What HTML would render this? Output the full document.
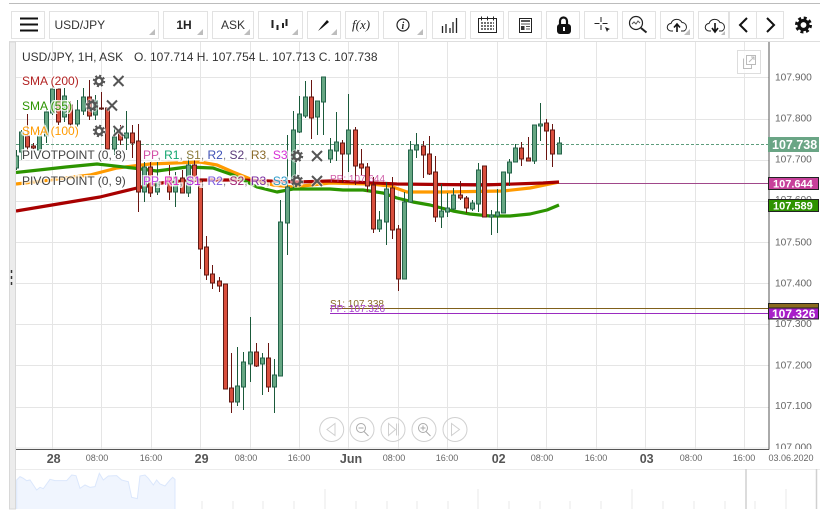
<!DOCTYPE html>
<html><head><meta charset="utf-8"><style>
html,body{margin:0;padding:0;background:#fff;width:834px;height:515px;overflow:hidden}
svg{display:block;font-family:"Liberation Sans",sans-serif}
.b{fill:#fff;stroke:#e2e2e2}
.tri{fill:#bdbdbd}
.ax{font-size:10.2px;fill:#666}
.t{font-size:9px;fill:#666;text-anchor:middle}
.d{font-size:12.5px;font-weight:bold;fill:#555;text-anchor:middle}
.l{font-size:12px;paint-order:stroke;stroke:rgba(255,255,255,.75);stroke-width:3px}
.i{fill:none;stroke:#222}
.z{fill:none;stroke:#d0d0d0}
</style></head><body>
<svg width="834" height="515" viewBox="0 0 834 515" xmlns="http://www.w3.org/2000/svg">
<defs>
<g id="gear"><circle r="7" fill="#fff" fill-opacity=".5"/><circle r="3.4" fill="none" stroke="#555" stroke-width="2.4"/><circle r="5.2" fill="none" stroke="#555" stroke-width="2" stroke-dasharray="2.1 1.98"/></g>
<g id="x"><path d="M-5-5L5 5M5-5L-5 5" stroke="#fff" stroke-opacity=".6" stroke-width="4" fill="none"/><path d="M-5-5L5 5M5-5L-5 5" stroke="#555" stroke-width="2" fill="none"/></g>
<clipPath id="ac"><rect x="770" y="42" width="60" height="407"/></clipPath>
<clipPath id="pc"><rect x="16" y="42" width="753" height="407"/></clipPath>
</defs>
<rect width="834" height="515" fill="#fff"/>
<!-- top lines -->
<path d="M9 3.5H820" stroke="#bcbcbc"/>
<path d="M9 41.5H820" stroke="#dedede"/>
<!-- side strip -->
<rect x="9.5" y="42" width="6" height="467" fill="#ececec" stroke="#d8d8d8"/>
<path d="M11.5 270v3M11.5 276v3M11.5 282v3" stroke="#333" stroke-width="1.5"/>
<!-- grid -->
<path d="M52.5 42V449M101.5 42V449M151.5 42V449M200.5 42V449M250.5 42V449M299.5 42V449M348.5 42V449M398.5 42V449M447.5 42V449M497.5 42V449M546.5 42V449M596.5 42V449M645.5 42V449M695.5 42V449M744.5 42V449M16 77.5H769M16 119.5H769M16 160.5H769M16 201.5H769M16 242.5H769M16 283.5H769M16 324.5H769M16 365.5H769M16 407.5H769M16 448H769" stroke="#e5e5e5" fill="none"/>
<g clip-path="url(#pc)">
<!-- horizontal levels -->
<path d="M16 144.5H769" stroke="#5d9e7d" stroke-dasharray="3 2"/>
<path d="M330 183.5H769" stroke="#a0488a"/>
<path d="M330 308.5H769" stroke="#80601a"/>
<path d="M330 313.5H769" stroke="#9a2cc0"/>
<!-- MAs -->
<polyline fill="none" stroke="#ff9a00" stroke-width="3.2" stroke-linejoin="round" points="16,184 50,180 90,175 117,168 150,164 200,162 217,165 233,172 253,180 273,185 293,187 330,183 370,184 390,186 407,192 443,192 503,191 530,188 559,182"/>
<polyline fill="none" stroke="#a80000" stroke-width="3.2" stroke-linejoin="round" points="16,211 40,207 100,197 137,188 167,182 200,180 240,180 297,182 330,181 397,184 483,185 543,183 559,182"/>
<polyline fill="none" stroke="#2c9400" stroke-width="3.2" stroke-linejoin="round" points="16,172.5 66,167 97,164 133,168 157,171 187,167 213,168 233,175 257,187 277,192 293,189 330,189 343,190 363,190 383,193 397,198 413,202 430,205 453,211 470,214 490,216 510,216 530,214 547,210 559,205"/>
<!-- wicks -->
<path fill="none" stroke="#1a5a3a" d="M16.5 150V170M21.5 130V160M39.5 130V153M46.5 108V143M52.5 85V115M64.5 88V122M77.5 100V127M83.5 88V115M95.5 95V120M114.5 127V155M126.5 111V150M144.5 162V202M157.5 162V195M175.5 172V207M188.5 155V197M237.5 347V406M243.5 352V410M250.5 317V382M262.5 353V395M274.5 359V413M280.5 200V376M287.5 135V255M293.5 111V188M299.5 96V133M305.5 81V118M317.5 101V135M323.5 77V135M330.5 138V163M336.5 112V161M348.5 94V172M379.5 211V232M386.5 182V245M404.5 192V279M410.5 141V202M416.5 133V158M441.5 184V228M447.5 193V217M453.5 188V210M472.5 200V211M478.5 163V212M491.5 210V235M497.5 189V233M509.5 159V186M515.5 144V162M534.5 125V164M540.5 103V141M559.5 137V154"/>
<path fill="none" stroke="#6a1410" d="M27.5 114V152M33.5 143V150M58.5 89V125M70.5 101V128M89.5 80V120M101.5 92V110M120.5 125V145M132.5 125V158M138.5 124V212M150.5 162V197M169.5 165V200M182.5 170V193M194.5 160V185M200.5 180V269M206.5 236V280M212.5 265V289M219.5 277V292M231.5 353V413M256.5 343V367M268.5 343V392M311.5 80V139M342.5 140V183M355.5 127V185M361.5 149V175M367.5 163V192M373.5 177V233M392.5 177V239M398.5 225V291M423.5 141V178M429.5 136V175M435.5 156V222M460.5 181V200M466.5 196V213M521.5 142V166M528.5 137V161M546.5 119V160M552.5 124V167"/>
<!-- bodies -->
<path fill="#66a783" stroke="#24634a" d="M14.5 156h4v12h-4zM19.5 132h4v20h-4zM37.5 136h4v14h-4zM44.5 112h4v24h-4zM50.5 89h4v24h-4zM62.5 96h4v21h-4zM75.5 110h4v14h-4zM81.5 97h4v14h-4zM93.5 101h4v14h-4zM112.5 137h4v12h-4zM124.5 133h4v5h-4zM142.5 167h4v25h-4zM155.5 182h4v10h-4zM173.5 177h4v15h-4zM186.5 165h4v28h-4zM235.5 386h4v16h-4zM241.5 362h4v25h-4zM248.5 352h4v12h-4zM260.5 358h4v6h-4zM272.5 375h4v12h-4zM278.5 222h4v154h-4zM285.5 187h4v36h-4zM291.5 130h4v48h-4zM297.5 114h4v18h-4zM303.5 97h4v19h-4zM315.5 101h4v16h-4zM321.5 77h4v25h-4zM328.5 150h4v9h-4zM334.5 142h4v9h-4zM346.5 130h4v24h-4zM377.5 220h4v9h-4zM384.5 189h4v33h-4zM402.5 202h4v77h-4zM408.5 150h4v52h-4zM414.5 145h4v5h-4zM439.5 211h4v6h-4zM445.5 208h4v4h-4zM451.5 195h4v14h-4zM470.5 203h4v6h-4zM476.5 170h4v34h-4zM489.5 215h4v2h-4zM495.5 212h4v4h-4zM501.5 172h4v41h-4zM507.5 162h4v11h-4zM513.5 148h4v14h-4zM532.5 125h4v36h-4zM538.5 124h4v2h-4zM557.5 143h4v11h-4z"/>
<path fill="#d94f3d" stroke="#5e1a14" d="M25.5 136h4v11h-4zM31.5 146h4v2h-4zM56.5 89h4v33h-4zM68.5 105h4v19h-4zM87.5 97h4v19h-4zM99.5 108h4v1h-4zM105.5 108h4v41h-4zM118.5 133h4v7h-4zM130.5 133h4v10h-4zM136.5 141h4v51h-4zM148.5 167h4v26h-4zM167.5 177h4v15h-4zM180.5 178h4v15h-4zM192.5 165h4v15h-4zM198.5 180h4v69h-4zM204.5 247h4v28h-4zM210.5 274h4v9h-4zM217.5 281h4v5h-4zM223.5 284h4v105h-4zM229.5 388h4v14h-4zM254.5 352h4v14h-4zM266.5 358h4v29h-4zM309.5 97h4v21h-4zM340.5 143h4v11h-4zM353.5 130h4v36h-4zM359.5 164h4v4h-4zM365.5 167h4v19h-4zM371.5 185h4v44h-4zM390.5 188h4v42h-4zM396.5 229h4v50h-4zM421.5 146h4v9h-4zM427.5 154h4v20h-4zM433.5 172h4v45h-4zM458.5 195h4v3h-4zM464.5 198h4v10h-4zM482.5 166h4v51h-4zM519.5 148h4v11h-4zM526.5 158h4v3h-4zM544.5 123h4v8h-4zM550.5 130h4v24h-4z"/>
</g>
<!-- level labels -->
<text x="330" y="182" font-size="10px" fill="#c8429a" fill-opacity=".85">PP: 107.644</text>
<text x="330" y="307" font-size="10px" fill="#8a6a2a">S1: 107.338</text>
<text x="330" y="312" font-size="10px" fill="#a83cd0">PP: 107.326</text>
<!-- legend -->
<text x="22" y="61" font-size="12px" fill="#333">USD/JPY, 1H, ASK <tspan dx="7.500">O. 107.714 H. 107.754 L. 107.713 C. 107.738</tspan></text>
<text class="l" x="22" y="85" fill="#b22222">SMA (200)</text>
<text class="l" x="22" y="110" fill="#2c9400">SMA (55)</text>
<text class="l" x="22" y="135" fill="#ff9a00">SMA (100)</text>
<use href="#gear" x="99" y="81"/><use href="#x" x="118.500" y="81"/>
<use href="#gear" x="92" y="105.500"/><use href="#x" x="112" y="105.500"/>
<use href="#gear" x="99" y="131"/><use href="#x" x="118.500" y="131"/>
<text class="l" x="22" y="159" fill="#444">PIVOTPOINT (0, 8)</text>
<text class="l" x="22" y="185" fill="#444">PIVOTPOINT (0, 9)</text>
<text class="l" x="143" y="159"><tspan fill="#d24fa6">PP</tspan><tspan fill="#888">, </tspan><tspan fill="#12a66f">R1</tspan><tspan fill="#888">, </tspan><tspan fill="#8b7a3a">S1</tspan><tspan fill="#888">, </tspan><tspan fill="#3d50b5">R2</tspan><tspan fill="#888">, </tspan><tspan fill="#5a3a7a">S2</tspan><tspan fill="#888">, </tspan><tspan fill="#8a6a2a">R3</tspan><tspan fill="#888">, </tspan><tspan fill="#d62fd6">S3</tspan></text>
<text class="l" x="143" y="185"><tspan fill="#c03ee0">PP</tspan><tspan fill="#888">, </tspan><tspan fill="#e01fc0">R1</tspan><tspan fill="#888">, </tspan><tspan fill="#b020d8">S1</tspan><tspan fill="#888">, </tspan><tspan fill="#7a5ae0">R2</tspan><tspan fill="#888">, </tspan><tspan fill="#a02070">S2</tspan><tspan fill="#888">, </tspan><tspan fill="#7a2aa0">R3</tspan><tspan fill="#888">, </tspan><tspan fill="#2a9ac8">S3</tspan></text>
<use href="#gear" x="297" y="156"/><use href="#x" x="317" y="156"/>
<use href="#gear" x="297" y="181"/><use href="#x" x="317" y="181"/>
<!-- popout -->
<rect x="737.500" y="50.500" width="23" height="23" fill="#fff" fill-opacity=".8" stroke="#ddd"/>
<path d="M743.500 58.500v10h8v-4M746.500 55.500h9v9h-9zM749 62l5-5M751 57h3v3" fill="none" stroke="#bbb"/>
<!-- axes -->
<path d="M769 42V449.500M16 449.500H769" stroke="#555" fill="none"/>
<g clip-path="url(#ac)">
<text class="ax" x="775" y="80.500">107.900</text>
<text class="ax" x="775" y="121.500">107.800</text>
<text class="ax" x="775" y="162.500">107.700</text>
<text class="ax" x="775" y="203">107.600</text>
<text class="ax" x="775" y="245.500">107.500</text>
<text class="ax" x="775" y="286.500">107.400</text>
<text class="ax" x="775" y="327">107.300</text>
<text class="ax" x="775" y="368.500">107.200</text>
<text class="ax" x="775" y="409">107.100</text>
<text class="ax" x="775" y="450.500">107.000</text>
</g>
<rect x="768" y="137" width="51" height="15" fill="#6aa585"/>
<text x="772" y="149" font-size="12.500px" font-weight="bold" fill="#fff">107.738</text>
<rect x="768.500" y="177.500" width="50" height="12" fill="#c7409a" stroke="#222"/>
<text x="773" y="187.500" font-size="11px" font-weight="bold" fill="#fff">107.644</text>
<rect x="768.500" y="199.500" width="50" height="12" fill="#2f9300" stroke="#222"/>
<text x="773" y="209.500" font-size="11px" font-weight="bold" fill="#fff">107.589</text>
<rect x="768.500" y="303.500" width="50" height="12" fill="#8a6a1e" stroke="#222"/>
<rect x="768.500" y="308" width="50" height="11" fill="#a81fc9" stroke="#222"/>
<text x="772" y="318" font-size="12px" font-weight="bold" fill="#fff">107.326</text>
<!-- time axis -->
<text class="d" x="53.700" y="463">28</text><text class="t" x="97" y="461">08:00</text><text class="t" x="151" y="461">16:00</text>
<text class="d" x="201.600" y="463">29</text><text class="t" x="246" y="461">08:00</text><text class="t" x="299" y="461">16:00</text>
<text class="d" x="351" y="463">Jun</text><text class="t" x="394" y="461">08:00</text><text class="t" x="447" y="461">16:00</text>
<text class="d" x="498.700" y="463">02</text><text class="t" x="542" y="461">08:00</text><text class="t" x="596" y="461">16:00</text>
<text class="d" x="646.700" y="463">03</text><text class="t" x="691" y="461">08:00</text><text class="t" x="744" y="461">16:00</text>
<text class="t" x="791" y="461">03.06.2020</text>
<path d="M16 469.500H820" stroke="#ececec"/>
<!-- navigator -->
<path d="M48 489V509M171 489V509M325 489V509M478 489V509M632 489V509M786 489V509M79 501V509M110 501V509M140 501V509M202 501V509M233 501V509M263 501V509M294 501V509M356 501V509M387 501V509M417 501V509M448 501V509M509 501V509M540 501V509M570 501V509M601 501V509M663 501V509M694 501V509M725 501V509M755 501V509" stroke="#e8e8e8"/>
<polyline transform="translate(0,410) scale(.3333)" fill="#f0f5fe" stroke="#dbe7fc" stroke-width="3" points="50,297 50,210 60,200 70,205 80,212 90,210 100,225 110,240 120,232 130,236 140,222 150,208 165,212 180,212 200,212 215,195 228,197 240,235 255,225 270,232 285,230 298,190 310,210 325,198 350,197 365,210 385,215 395,262 412,266 420,198 435,195 445,205 460,225 470,210 480,222 495,228 510,210 518,202 525,208 525,297"/>
<path d="M746 469V509M816.500 469V509" stroke="#d0d0d0" stroke-width="1.500"/>
<!-- zoom controls -->
<circle cx="331.700" cy="429.500" r="12" class="z"/><circle cx="362" cy="429.500" r="12" class="z"/><circle cx="393" cy="429.500" r="12" class="z"/><circle cx="424" cy="429.500" r="12" class="z"/><circle cx="455" cy="429.500" r="12" class="z"/>
<path class="z" d="M335 423.500v12l-8-6zM388.500 423.500v12l7-6zM396.500 423.500v12M398.500 423.500v12M451.500 423.500v12l8-6z"/>
<g style="stroke:#aaa;fill:none"><circle cx="361" cy="428" r="4.500"/><path d="M358.500 428h5M364 431.500l4.500 4.500"/><circle cx="423" cy="428" r="4.500"/><path d="M420.500 428h5M423 425.500v5M426 431.500l4.500 4.500"/></g>
<!-- toolbar -->
<rect class="b" x="11.500" y="11.500" width="33" height="27"/>
<path d="M20 18.500H38M20 24.500H38M20 30.500H38" stroke="#111" stroke-width="2"/>
<rect class="b" x="49.500" y="11.500" width="109" height="27"/>
<text x="54.500" y="29" font-size="12px" fill="#333">USD/JPY</text>
<path class="tri" d="M155 29v6h-6z"/>
<rect class="b" x="163.500" y="11.500" width="44" height="27"/>
<text x="184" y="29" font-size="12px" font-weight="bold" fill="#222" text-anchor="middle">1H</text>
<path class="tri" d="M203 29v6h-6z"/>
<rect class="b" x="212.500" y="11.500" width="41" height="27"/>
<text x="233" y="29" font-size="12px" fill="#333" text-anchor="middle">ASK</text>
<path class="tri" d="M250 29v6h-6z"/>
<rect class="b" x="258.500" y="11.500" width="44" height="27"/>
<path d="M272.500 20v8M277.500 25v5M283 23v5M286.500 19v7" stroke="#222" stroke-width="2"/>
<path class="tri" d="M298 29v6h-6z"/>
<rect class="b" x="307.500" y="11.500" width="33" height="27"/>
<path d="M318 31l3-4 6-7 2 2-7 6z" fill="#111"/>
<path class="tri" d="M337 29v6h-6z"/>
<rect class="b" x="345.500" y="11.500" width="33" height="27"/>
<text x="352" y="29" font-family="Liberation Serif" font-style="italic" font-size="13px" fill="#222">f(x)</text>
<rect class="b" x="383.500" y="11.500" width="43" height="27"/>
<circle cx="403" cy="25" r="6" class="i" stroke-width="1.200"/>
<text x="401.500" y="29" font-family="Liberation Serif" font-style="italic" font-weight="bold" font-size="10px" fill="#222">i</text>
<path class="tri" d="M423 29v6h-6z"/>
<rect class="b" x="432.500" y="11.500" width="33" height="27"/>
<path d="M442.500 33v-7M446 33v-9M450 33v-5M453 33v-11M456.500 33v-15" stroke="#222" stroke-width="1.300"/>
<rect class="b" x="470.500" y="11.500" width="33" height="27"/>
<rect x="478.500" y="18.500" width="18" height="14" class="i" stroke="#333"/>
<path d="M481.500 16.500v4M487.500 16.500v4M493.500 16.500v4" class="i"/>
<path d="M481 23h13M481 26h13M481 29h13" stroke="#444" stroke-width="1.500" stroke-dasharray="2 1"/>
<rect class="b" x="508.500" y="11.500" width="33" height="27"/>
<rect x="519.500" y="18.500" width="12" height="14" class="i" stroke="#333"/>
<path d="M521 21h9" stroke="#222" stroke-width="1.500"/><path d="M521 24h9M526 26.500h4M526 29h4" stroke="#555"/><rect x="521" y="26" width="3.500" height="4" fill="#333"/>
<rect class="b" x="546.500" y="11.500" width="33" height="27"/>
<path d="M560 25v-4a3.500 3.500 0 0 1 7 0v4" fill="none" stroke="#111" stroke-width="2.200"/>
<rect x="557" y="24" width="14" height="10" rx="3" fill="#111"/><rect x="563" y="27" width="2" height="4" fill="#fff"/>
<rect class="b" x="584.500" y="11.500" width="33" height="27"/>
<path d="M601 17v5M601 25v5M594.500 23.500h5M602.500 23.500h5" stroke="#222"/><path d="M605 27l5 2-2 1-1 2z" fill="#222"/>
<rect class="b" x="622.500" y="11.500" width="33" height="27"/>
<circle cx="636" cy="23" r="6.500" class="i" stroke-width="1.200"/>
<path d="M632 24l2-2 2 2 2-3 2 2" fill="none" stroke="#555"/><path d="M641 28l5.500 4.500" stroke="#222" stroke-width="2"/>
<rect class="b" x="660.500" y="11.500" width="33" height="27"/>
<path d="M673 31h-2a3.500 3.500 0 0 1 0-7.500a6 6 0 0 1 11-1a4.500 4.500 0 0 1 2 8.500h-3" class="i"/>
<path d="M677 32v-7M674 27.500l3-3.500 3 3.500" fill="none" stroke="#111" stroke-width="1.600"/>
<path class="tri" d="M690 29v6h-6z"/>
<rect x="698.500" y="11.500" width="30" height="27" class="b"/>
<path d="M711 31h-2a3.500 3.500 0 0 1 0-7.500a6 6 0 0 1 11-1a4.500 4.500 0 0 1 2 8.500h-3" class="i"/>
<path d="M715 23v8M712 28l3 4 3-4" fill="none" stroke="#111" stroke-width="1.600"/>
<path class="tri" d="M725 31v4h-4z"/>
<rect class="b" x="729.500" y="11.500" width="27" height="27"/>
<rect class="b" x="756.500" y="11.500" width="27" height="27"/>
<path d="M747 18l-7 7 7 7M767 18l7 7-7 7" fill="none" stroke="#111" stroke-width="2"/>
<circle cx="803.500" cy="25" r="4.500" fill="none" stroke="#111" stroke-width="3.200"/>
<circle cx="803.500" cy="25" r="7" fill="none" stroke="#111" stroke-width="3" stroke-dasharray="2.900 2.600"/>
</svg>
</body></html>
